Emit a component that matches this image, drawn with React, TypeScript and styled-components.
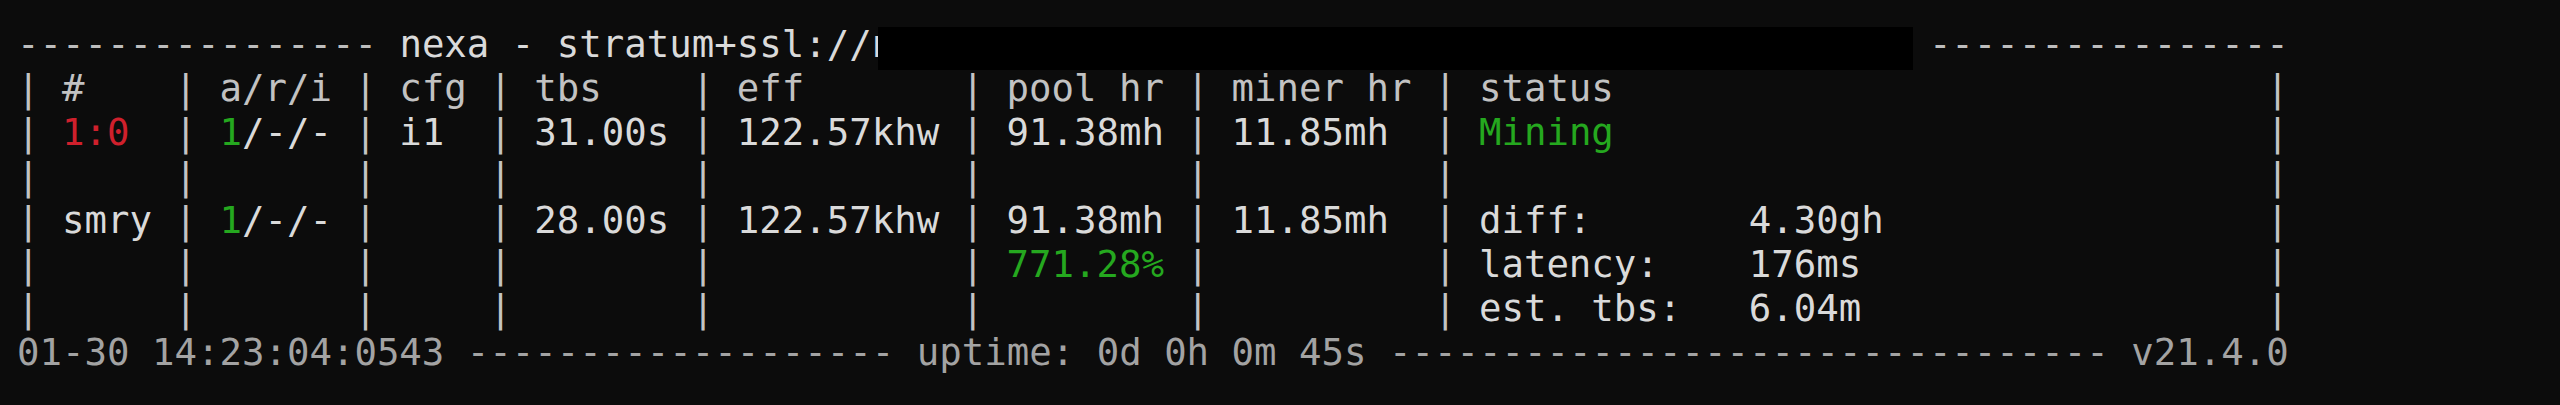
import React from "react";
import styled, { createGlobalStyle } from "styled-components";

const GlobalStyle = createGlobalStyle`
  html, body {
    margin: 0;
    padding: 0;
    background: #0c0c0c;
  }
  #root {
    min-height: 405px;
  }
`;

type Tone = "plain" | "head" | "red" | "green" | "dim" | "rule";

const toneColor: Record<Tone, string> = {
  plain: "#dadada",
  head: "#c2c2c2",
  red: "#d0202c",
  green: "#25a81f",
  dim: "#a3a3a3",
  rule: "#bdbdbd",
};

const Screen = styled.main`
  box-sizing: border-box;
  height: 405px;
  padding: 22px 0 0 17px;
  background: #0c0c0c;
  font-family: "DejaVu Sans Mono", "Liberation Mono", monospace;
  font-size: 37.37px;
  color: #dadada;
`;

const Line = styled.div`
  display: flex;
  height: 44px;
  line-height: 44px;
  white-space: pre;
`;

const Ink = styled.span<{ $tone: Tone }>`
  color: ${(p) => toneColor[p.$tone]};
`;

const Bar = styled.span`
  display: inline-block;
  width: 1ch;
  color: #c4c4c4;
`;

const Cell = styled.span<{ $w: number }>`
  display: inline-block;
  width: ${(p) => p.$w}ch;
  overflow: hidden;
`;

const UrlSlot = styled.span`
  position: relative;
  display: inline-block;
  width: 46ch;
  color: #dadada;
`;

const Redaction = styled.span`
  position: absolute;
  left: 6px;
  top: 5px;
  width: 1035px;
  height: 43px;
  background: #000000;
`;

type Part = { t: string; tone?: Tone };
type CellSpec = Part[];

const WIDTHS = [6, 7, 5, 8, 11, 9, 10, 36];

const p = (t: string, tone: Tone = "plain"): Part => ({ t, tone });
const empty: CellSpec = [];

const header: CellSpec[] = [
  [p(" #", "head")],
  [p(" a/r/i", "head")],
  [p(" cfg", "head")],
  [p(" tbs", "head")],
  [p(" eff", "head")],
  [p(" pool hr", "head")],
  [p(" miner hr", "head")],
  [p(" status", "head")],
];

const rows: CellSpec[][] = [
  header,
  [
    [p(" "), p("1:0", "red")],
    [p(" "), p("1", "green"), p("/-/-")],
    [p(" i1")],
    [p(" 31.00s")],
    [p(" 122.57khw")],
    [p(" 91.38mh")],
    [p(" 11.85mh")],
    [p(" "), p("Mining", "green")],
  ],
  [empty, empty, empty, empty, empty, empty, empty, empty],
  [
    [p(" smry")],
    [p(" "), p("1", "green"), p("/-/-")],
    empty,
    [p(" 28.00s")],
    [p(" 122.57khw")],
    [p(" 91.38mh")],
    [p(" 11.85mh")],
    [p(" diff:       4.30gh")],
  ],
  [
    empty,
    empty,
    empty,
    empty,
    empty,
    [p(" "), p("771.28%", "green")],
    empty,
    [p(" latency:    176ms")],
  ],
  [
    empty,
    empty,
    empty,
    empty,
    empty,
    empty,
    empty,
    [p(" est. tbs:   6.04m")],
  ],
];

const TableRow: React.FC<{ cells: CellSpec[] }> = ({ cells }) => (
  <Line>
    {cells.map((cell, i) => (
      <React.Fragment key={i}>
        <Bar>|</Bar>
        <Cell $w={WIDTHS[i]}>
          {cell.map((part, j) => (
            <Ink key={j} $tone={part.tone ?? "plain"}>
              {part.t}
            </Ink>
          ))}
        </Cell>
      </React.Fragment>
    ))}
    <Bar>|</Bar>
  </Line>
);

const dashes = (n: number) => "-".repeat(n);

export default function App() {
  return (
    <>
      <GlobalStyle />
      <Screen>
        <Line>
          <Ink $tone="rule">{dashes(16)}</Ink>
          <Ink $tone="plain"> nexa - stratum+ssl://</Ink>
          <UrlSlot>
            n
            <Redaction />
          </UrlSlot>
          <Ink $tone="rule"> {dashes(16)}</Ink>
        </Line>
        {rows.map((r, i) => (
          <TableRow key={i} cells={r} />
        ))}
        <Line>
          <Ink $tone="dim">01-30 14:23:04:0543 </Ink>
          <Ink $tone="dim">{dashes(19)}</Ink>
          <Ink $tone="dim"> uptime: 0d 0h 0m 45s </Ink>
          <Ink $tone="dim">{dashes(32)}</Ink>
          <Ink $tone="dim"> v21.4.0</Ink>
        </Line>
      </Screen>
    </>
  );
}
